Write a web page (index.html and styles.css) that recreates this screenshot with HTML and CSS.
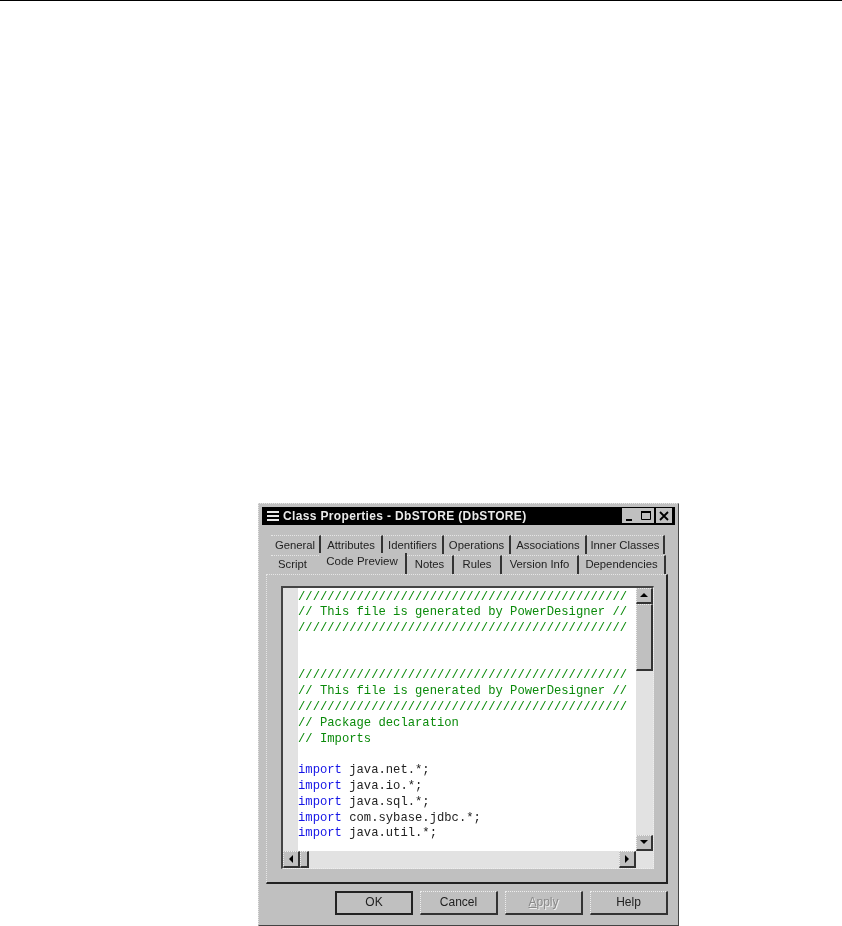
FILE: index.html
```html
<!DOCTYPE html>
<html lang="en">
<head>
<meta charset="utf-8">
<title>Class Properties</title>
<link rel="stylesheet" href="styles.css">
</head>
<body>
<div class="rule"></div>
<div class="dialog">
  <div class="titlebar">
    <svg class="sysicon" width="12" height="10" viewBox="0 0 12 10"><path d="M0 0h12v2H0zM0 4h12v2H0zM0 8h12v2H0z" fill="#e8e8e8"/></svg>
    <span class="title">Class Properties - DbSTORE (DbSTORE)</span>
    <div class="winbtns">
      <span class="winbtn"><svg width="14" height="12" viewBox="0 0 14 12"><path d="M3 9h6v2H3z" fill="#000"/></svg></span>
      <span class="winbtn"><svg width="14" height="12" viewBox="0 0 14 12"><path d="M2.500 2.500h9v7h-9z" fill="none" stroke="#000"/><path d="M2 1h10v2H2z" fill="#000"/></svg></span>
      <span class="winbtn gap"><svg width="14" height="12" viewBox="0 0 14 12"><path d="M3 2l8 8M11 2l-8 8" fill="none" stroke="#000" stroke-width="1.800"/></svg></span>
    </div>
  </div>
  <div class="tabs tabs-back">
    <span class="tab">General</span>
    <span class="tab">Attributes</span>
    <span class="tab">Identifiers</span>
    <span class="tab">Operations</span>
    <span class="tab">Associations</span>
    <span class="tab">Inner Classes</span>
  </div>
  <div class="tabs tabs-front">
    <span class="tab plain">Script</span>
    <span class="tab active">Code Preview</span>
    <span class="tab">Notes</span>
    <span class="tab">Rules</span>
    <span class="tab">Version Info</span>
    <span class="tab">Dependencies</span>
  </div>
  <div class="panel">
    <div class="editor">
      <div class="editor-main">
        <div class="gutter"></div>
        <pre class="code"><span class="c">/////////////////////////////////////////////</span>
<span class="c">// This file is generated by PowerDesigner //</span>
<span class="c">/////////////////////////////////////////////</span>


<span class="c">/////////////////////////////////////////////</span>
<span class="c">// This file is generated by PowerDesigner //</span>
<span class="c">/////////////////////////////////////////////</span>
<span class="c">// Package declaration</span>
<span class="c">// Imports</span>

<span class="k">import</span> java.net.*;
<span class="k">import</span> java.io.*;
<span class="k">import</span> java.sql.*;
<span class="k">import</span> com.sybase.jdbc.*;
<span class="k">import</span> java.util.*;</pre>
        <div class="vscroll">
          <span class="sbtn"><svg width="8" height="5" viewBox="0 0 8 5"><path d="M4 0l4 4H0z" fill="#000"/></svg></span>
          <span class="vthumb"></span>
          <span class="vtrack"></span>
          <span class="sbtn"><svg width="8" height="5" viewBox="0 0 8 5"><path d="M0 0h8L4 4z" fill="#000"/></svg></span>
        </div>
      </div>
      <div class="hscroll">
        <span class="sbtn"><svg width="5" height="8" viewBox="0 0 5 8"><path d="M4 0v8L0 4z" fill="#000"/></svg></span>
        <span class="hthumb"></span>
        <span class="htrack"></span>
        <span class="sbtn"><svg width="5" height="8" viewBox="0 0 5 8"><path d="M0 0l4 4-4 4z" fill="#000"/></svg></span>
        <span class="corner"></span>
      </div>
    </div>
  </div>
  <div class="actions">
    <button class="btn default">OK</button>
    <button class="btn">Cancel</button>
    <button class="btn disabled"><u>A</u>pply</button>
    <button class="btn">Help</button>
  </div>
</div>
</body>
</html>
```
FILE: styles.css
```css
html, body {
  margin: 0;
  padding: 0;
  background: #fff;
  overflow: hidden;
}
body {
  height: 926px;
  font-family: "Liberation Sans", Arial, sans-serif;
}
.rule {
  height: 1px;
  background: #000;
}
.dialog {
  box-sizing: border-box;
  width: 421px;
  height: 423px;
  margin: 502px 0 0 258px;
  padding: 3px 3px 0 3px;
  background: #c0c0c0;
  border: 1px dotted #e6e6e6;
  border-right: 1px solid #444;
  border-bottom: 1px solid #444;
  filter: blur(0.3px);
}
.titlebar {
  height: 18px;
  background: #000;
  display: flex;
  align-items: center;
  padding: 0 3px 1px 5px;
  box-sizing: border-box;
  color: #eaeaea;
}
.sysicon {
  margin-right: 4px;
}
.title {
  font-size: 12px;
  font-weight: bold;
  letter-spacing: 0.35px;
  white-space: nowrap;
}
.winbtns {
  margin-left: auto;
  display: flex;
}
.winbtn {
  width: 16px;
  height: 15px;
  background: #c0c0c0;
  display: flex;
  align-items: center;
  justify-content: center;
}
.winbtn.gap {
  margin-left: 2px;
}
.tabs {
  display: grid;
  font-size: 11.300px;
  color: #222;
}
.tabs-back {
  grid-template-columns: 50px 62px 61px 67px 76px 78px;
  margin: 10px 0 0 9px;
  height: 19px;
}
.tabs-front {
  grid-template-columns: 48px 88px 47px 48px 77px 87px;
  margin: 1px 0 0 9px;
  height: 19px;
}
.tab {
  display: flex;
  align-items: center;
  justify-content: center;
  border-right: 2px solid #333;
  border-top: 1px dotted #e6e6e6;
  white-space: nowrap;
}
.tabs-front .tab {
  padding-bottom: 2px;
  box-sizing: border-box;
}
.tab.plain {
  border-right: 0;
  padding-right: 5px;
}
.tabs-front .tab.active {
  border-top: 0;
  align-items: flex-start;
  padding: 2px 0 0;
  margin-top: -2px;
  height: 21px;
  background: #c0c0c0;
  position: relative;
  z-index: 1;
  font-size: 11.500px;
}
.panel {
  box-sizing: border-box;
  width: 402px;
  height: 310px;
  margin: 0 0 0 4px;
  padding: 11px 13px 14px 14px;
  border-top: 1px dotted #e6e6e6;
  border-left: 1px dotted #e6e6e6;
  border-right: 2px solid #222;
  border-bottom: 2px solid #222;
}
.editor {
  display: flex;
  flex-direction: column;
  width: 373px;
  height: 283px;
  box-sizing: border-box;
  border-top: 2px solid #444;
  border-left: 2px solid #444;
  border-right: 1px dotted #eee;
  border-bottom: 1px dotted #eee;
  background: #e2e2e2;
}
.editor-main {
  display: flex;
  height: 263px;
}
.gutter {
  width: 15px;
  background: #e2e2e2;
  flex: none;
}
.code {
  flex: 1;
  margin: 0;
  padding: 1.500px 0 0;
  overflow: hidden;
  background: #fff;
  font-family: "Liberation Mono", "Courier New", monospace;
  font-size: 12.200px;
  line-height: 15.800px;
  color: #222;
}
.c { color: #0a8a0a; }
.k { color: #1414e6; }
.vscroll {
  width: 17px;
  flex: none;
  display: flex;
  flex-direction: column;
  background: #e2e2e2;
}
.sbtn {
  box-sizing: border-box;
  width: 17px;
  height: 16px;
  flex: none;
  display: flex;
  align-items: center;
  justify-content: center;
  background: #c0c0c0;
  border-top: 1px dotted #eee;
  border-left: 1px dotted #eee;
  border-right: 2px solid #333;
  border-bottom: 2px solid #333;
}
.hscroll .sbtn {
  height: 17px;
}
.vthumb {
  box-sizing: border-box;
  height: 67px;
  flex: none;
  background: #c0c0c0;
  border-top: 1px dotted #eee;
  border-left: 1px dotted #eee;
  border-right: 2px solid #333;
  border-bottom: 2px solid #333;
}
.vtrack {
  flex: 1;
}
.hscroll {
  display: flex;
  height: 17px;
}
.hthumb {
  box-sizing: border-box;
  width: 9px;
  flex: none;
  background: #c0c0c0;
  border-top: 1px dotted #eee;
  border-left: 1px dotted #eee;
  border-right: 2px solid #333;
  border-bottom: 2px solid #333;
}
.htrack {
  flex: 1;
}
.corner {
  width: 17px;
  flex: none;
}
.actions {
  display: flex;
  justify-content: flex-end;
  gap: 7px;
  margin: 7px 7px 0 0;
}
.btn {
  box-sizing: border-box;
  width: 78px;
  height: 24px;
  padding: 0 0 2px;
  background: #c0c0c0;
  font: 12px "Liberation Sans", Arial, sans-serif;
  color: #222;
  border-top: 1px dotted #eee;
  border-left: 1px dotted #eee;
  border-right: 2px solid #333;
  border-bottom: 2px solid #333;
}
.btn.default {
  border: 2px solid #222;
}
.btn.disabled {
  color: #8a8a8a;
  text-shadow: 1px 1px 0 #eee;
}
```
